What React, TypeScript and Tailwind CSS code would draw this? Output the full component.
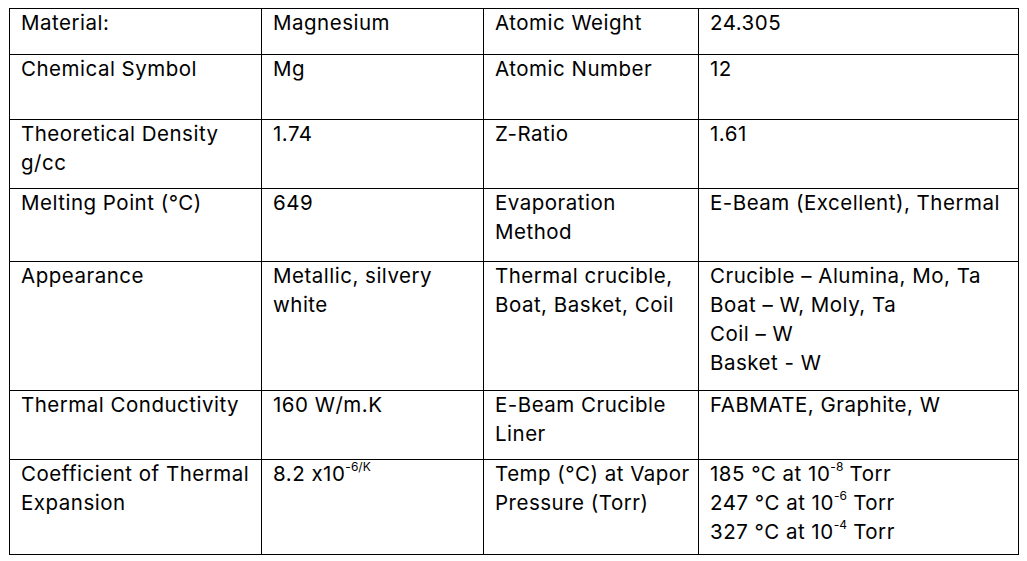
function Sup({ children }: { children: React.ReactNode }) {
  return <sup className="relative -top-[2px] text-[12px] tracking-normal align-super leading-none">{children}</sup>
}

const ROWS: { h: string; cells: React.ReactNode[] }[] = [
  { h: 'h-[46px]', cells: ['Material:', 'Magnesium', 'Atomic Weight', '24.305'] },
  { h: 'h-[65px]', cells: ['Chemical Symbol', 'Mg', 'Atomic Number', '12'] },
  { h: 'h-[69px]', cells: [<>Theoretical Density<br />g/cc</>, '1.74', 'Z-Ratio', '1.61'] },
  { h: 'h-[73px]', cells: ['Melting Point (°C)', '649', <>Evaporation<br />Method</>, 'E-Beam (Excellent), Thermal'] },
  {
    h: 'h-[129px]',
    cells: [
      'Appearance',
      <>Metallic, silvery<br />white</>,
      <>Thermal crucible,<br />Boat, Basket, Coil</>,
      <>Crucible – Alumina, Mo, Ta<br />Boat – W, Moly, Ta<br />Coil – W<br />Basket - W</>,
    ],
  },
  { h: 'h-[69px]', cells: ['Thermal Conductivity', '160 W/m.K', <>E-Beam Crucible<br />Liner</>, 'FABMATE, Graphite, W'] },
  {
    h: 'h-[95px]',
    cells: [
      <>Coefficient of Thermal<br />Expansion</>,
      <>8.2 x10<Sup>-6/K</Sup></>,
      <>Temp (°C) at Vapor<br />Pressure (Torr)</>,
      <>185 °C at 10<Sup>-8</Sup> Torr<br />247 °C at 10<Sup>-6</Sup> Torr<br />327 °C at 10<Sup>-4</Sup> Torr</>,
    ],
  },
]

export default function App() {
  return (
    <div className="w-[1027px] h-[561px] bg-white pl-[9px] pt-[8px] font-['Inter','Liberation_Sans',sans-serif] [font-feature-settings:'calt'_0]">
      <table className="table-fixed border-collapse w-[1009px] text-black text-[20.5px] tracking-[0.5px] leading-[29px]">
        <colgroup>
          <col className="w-[252px]" />
          <col className="w-[222px]" />
          <col className="w-[215px]" />
          <col className="w-[320px]" />
        </colgroup>
        <tbody>
          {ROWS.map((row, i) => (
            <tr key={i} className={row.h}>
              {row.cells.map((c, j) => (
                <td key={j} className="border border-black align-top px-[11px] pt-0 pb-0 whitespace-nowrap">
                  <div className="-mt-px">{c}</div>
                </td>
              ))}
            </tr>
          ))}
        </tbody>
      </table>
    </div>
  )
}
